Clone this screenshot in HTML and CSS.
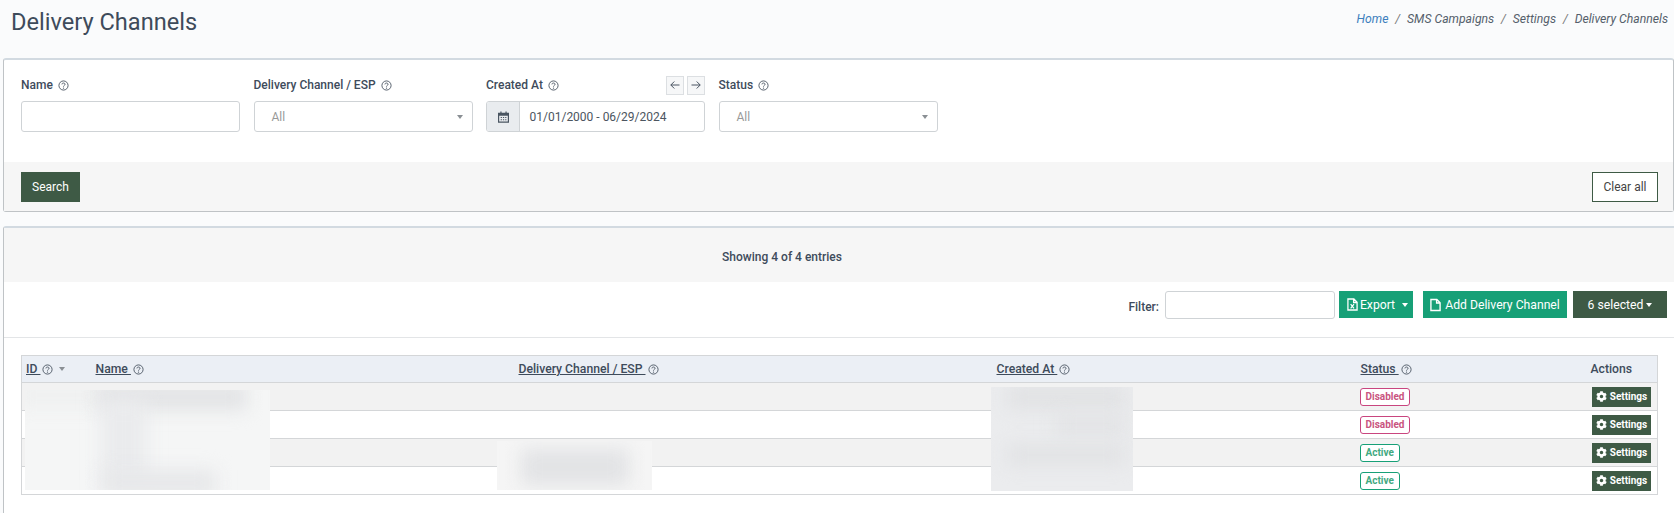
FILE: index.html
```html
<!DOCTYPE html>
<html lang="en">
<head>
<meta charset="utf-8">
<title>Delivery Channels</title>
<link rel="stylesheet" href="styles.css">
</head>
<body>
<svg class="defs" width="0" height="0" aria-hidden="true">
  <symbol id="q" viewBox="0 0 12 12"><circle cx="6" cy="6" r="5" fill="none" stroke="currentColor" stroke-width="1"/><path d="M4.3 4.8c0-1 .8-1.5 1.7-1.5s1.7.6 1.7 1.4c0 1.2-1.7 1.2-1.7 2.5" fill="none" stroke="currentColor" stroke-width="1"/><circle cx="6" cy="8.8" r=".7" fill="currentColor"/></symbol>
  <symbol id="gear" viewBox="0 0 512 512"><path fill="currentColor" d="M487.4 315.7l-42.6-24.6c4.3-23.2 4.3-47 0-70.2l42.6-24.6c4.9-2.8 7.1-8.6 5.5-14-11.1-35.6-30-67.8-54.7-94.6-3.8-4.1-10-5.1-14.8-2.3L380.8 110c-17.9-15.4-38.5-27.3-60.8-35.1V25.8c0-5.6-3.9-10.5-9.4-11.7-36.7-8.2-74.3-7.8-109.2 0-5.5 1.2-9.4 6.1-9.4 11.7V75c-22.2 7.9-42.8 19.8-60.8 35.1L88.7 85.5c-4.9-2.8-11-1.9-14.8 2.3-24.7 26.7-43.6 58.9-54.7 94.6-1.7 5.4.6 11.2 5.5 14L67.3 221c-4.3 23.2-4.3 47 0 70.2l-42.6 24.6c-4.9 2.8-7.1 8.6-5.5 14 11.1 35.6 30 67.8 54.7 94.6 3.8 4.1 10 5.1 14.8 2.3l42.6-24.6c17.9 15.4 38.5 27.3 60.8 35.1v49.2c0 5.6 3.9 10.5 9.4 11.7 36.7 8.2 74.3 7.8 109.2 0 5.5-1.2 9.4-6.1 9.4-11.7v-49.2c22.2-7.9 42.8-19.8 60.8-35.1l42.6 24.6c4.9 2.8 11 1.9 14.8-2.3 24.7-26.7 43.6-58.9 54.7-94.6 1.5-5.5-.7-11.3-5.6-14.1zM256 336c-44.1 0-80-35.9-80-80s35.9-80 80-80 80 35.9 80 80-35.9 80-80 80z"/></symbol>
</svg>

<header class="page-head">
  <h1 class="title">Delivery Channels</h1>
  <nav class="crumbs"><a class="crumb-link">Home</a><span class="sep">/</span><span>SMS Campaigns</span><span class="sep">/</span><span>Settings</span><span class="sep">/</span><span>Delivery Channels</span></nav>
</header>

<section class="panel search-panel">
  <div class="fields">
    <div class="field">
      <div class="label-row"><label class="lbl">Name</label><svg class="qi"><use href="#q"/></svg></div>
      <div class="control"></div>
    </div>
    <div class="field">
      <div class="label-row"><label class="lbl">Delivery Channel / ESP</label><svg class="qi"><use href="#q"/></svg></div>
      <div class="control select"><span class="ph">All</span><i class="caret gray"></i></div>
    </div>
    <div class="field">
      <div class="label-row"><label class="lbl">Created At</label><svg class="qi"><use href="#q"/></svg>
        <span class="arrows">
          <span class="arrow"><svg viewBox="0 0 12 12" width="12" height="12"><path d="M10.5 6H1.8M5.3 2.5 1.8 6l3.5 3.5" fill="none" stroke="currentColor" stroke-width="1"/></svg></span>
          <span class="arrow"><svg viewBox="0 0 12 12" width="12" height="12"><path d="M1.5 6h8.7M6.7 2.5 10.2 6 6.7 9.5" fill="none" stroke="currentColor" stroke-width="1"/></svg></span>
        </span>
      </div>
      <div class="control date">
        <span class="addon"><svg viewBox="0 0 14 14" width="13" height="14"><path fill="none" stroke="currentColor" stroke-width="1.3" d="M1.7 3h10.6v9.6H1.7z"/><path fill="currentColor" d="M1.7 3h10.6v2.6H1.7zM3.6 1h1.3v2.5H3.6zM9.1 1h1.3v2.5H9.1zM4 7h1.3v1.2H4zM6.4 7h1.3v1.2H6.4zM8.8 7h1.3v1.2H8.8zM4 9.4h1.3v1.2H4zM6.4 9.4h1.3v1.2H6.4zM8.8 9.4h1.3v1.2H8.8z"/></svg></span>
        <span class="date-val">01/01/2000 - 06/29/2024</span>
      </div>
    </div>
    <div class="field">
      <div class="label-row"><label class="lbl">Status</label><svg class="qi"><use href="#q"/></svg></div>
      <div class="control select"><span class="ph">All</span><i class="caret gray"></i></div>
    </div>
  </div>
  <div class="search-foot">
    <button class="btn dark search">Search</button>
    <button class="btn outline">Clear all</button>
  </div>
</section>

<section class="panel results">
  <div class="showing">Showing 4 of 4 entries</div>
  <div class="toolbar">
    <span class="filter-lbl">Filter:</span>
    <span class="control filter-input"></span>
    <button class="btn green export">
      <svg viewBox="0 0 12 14" width="10" height="13"><path d="M1 1h6.5L11 4.5V13H1zM7.2 1v3.8H11" fill="none" stroke="currentColor" stroke-width="1.4"/><path d="M4 6.5l3.6 4.6M7.6 6.5 4 11.1" stroke="currentColor" stroke-width="1.3"/></svg>
      Export<i class="caret white ex-caret"></i></button>
    <button class="btn green add">
      <svg viewBox="0 0 12 14" width="11" height="14"><path d="M1 1h6.5L11 4.5V13H1zM7.2 1v3.8H11" fill="none" stroke="currentColor" stroke-width="1.5"/></svg>
      Add Delivery Channel</button>
    <button class="btn dark selected">6 selected<i class="caret white sel-caret"></i></button>
  </div>

  <div class="table-wrap">
    <table class="grid">
      <colgroup><col class="c-id"><col class="c-name"><col class="c-esp"><col class="c-date"><col class="c-status"><col></colgroup>
      <thead>
        <tr>
          <th><a class="sort">ID </a><svg class="qi th-q"><use href="#q"/></svg><i class="caret gray id-caret"></i></th>
          <th><a class="sort">Name </a><svg class="qi th-q"><use href="#q"/></svg></th>
          <th><a class="sort">Delivery Channel / ESP </a><svg class="qi th-q"><use href="#q"/></svg></th>
          <th><a class="sort">Created At </a><svg class="qi th-q"><use href="#q"/></svg></th>
          <th><a class="sort">Status </a><svg class="qi th-q"><use href="#q"/></svg></th>
          <th class="act-h">Actions</th>
        </tr>
      </thead>
      <tbody>
        <tr class="odd"><td></td><td></td><td></td><td></td><td><span class="badge off">Disabled</span></td><td class="act"><button class="set"><svg class="gear"><use href="#gear"/></svg>Settings</button></td></tr>
        <tr><td></td><td></td><td></td><td></td><td><span class="badge off">Disabled</span></td><td class="act"><button class="set"><svg class="gear"><use href="#gear"/></svg>Settings</button></td></tr>
        <tr class="odd"><td></td><td></td><td></td><td></td><td><span class="badge on">Active</span></td><td class="act"><button class="set"><svg class="gear"><use href="#gear"/></svg>Settings</button></td></tr>
        <tr><td></td><td></td><td></td><td></td><td><span class="badge on">Active</span></td><td class="act"><button class="set"><svg class="gear"><use href="#gear"/></svg>Settings</button></td></tr>
      </tbody>
    </table>
    <div class="blur b-name"><i class="streak s0"></i><i class="streak s1"></i><i class="streak s2"></i><i class="streak s4"></i></div>
    <div class="blur b-esp"><i class="streak s5"></i></div>
    <div class="blur b-date"><i class="streak s7"></i><i class="streak s8"></i><i class="streak s9"></i></div>
  </div>
</section>
</body>
</html>
```
FILE: styles.css
```css
* { box-sizing: border-box; }
html, body { margin: 0; height: 513px; overflow: hidden; }
body {
  background: #fafbfc;
  font-family: Roboto, "Liberation Sans", sans-serif;
  color: #3e4b5b;
  padding-left: 3px;
  display: flex;
  flex-direction: column;
}
.defs { position: absolute; }

.page-head {
  height: 58px;
  margin-left: -3px;
  padding: 8px 6px 0 11px;
  display: flex;
  justify-content: space-between;
  align-items: flex-start;
  flex: none;
}
.title { margin: 0; font-size: 23.6px; font-weight: 400; line-height: 29px; color: #3e4b5b; }
.crumbs { font-size: 12.2px; font-style: italic; color: #555f6b; display: flex; gap: 6.9px; line-height: 20px; margin-top: 1px; }
.crumb-link { color: #3d7fbd; }
.sep { color: #777; }

.panel { background: #fff; flex: none; }
.search-panel {
  height: 154px;
  border: 1px solid #bfc3c6;
  border-top: 2px solid #d2dae1;
  border-radius: 3px;
  display: flex;
  flex-direction: column;
  margin-bottom: 14px;
}
.fields { flex: 1; display: flex; gap: 13.5px; padding: 13px 17px 0; }
.field { width: 219px; }
.label-row { height: 24px; display: flex; align-items: center; gap: 5px; margin-bottom: 4px; }
.lbl { font-size: 12px; font-weight: 500; color: #3e4b5b; }
.qi { width: 11px; height: 11px; color: #4a5562; flex: none; }
.arrows { margin-left: auto; display: flex; gap: 3px; }
.arrow { width: 18px; height: 19px; border: 1px solid #dcdfe2; background: #f6f7f8; display: flex; align-items: center; justify-content: center; color: #4a5562; }
.control { display: flex; align-items: center; height: 31px; border: 1px solid #cfd3d6; border-radius: 3px; background: #fff; font-size: 12px; }
.select { padding: 0 9px 0 17px; justify-content: space-between; }
.ph { color: #999; }
.caret { display: inline-block; width: 0; height: 0; border-left: 3.5px solid transparent; border-right: 3.5px solid transparent; border-top: 4px solid #888; }
.caret.white { border-top-color: #fff; }
.caret.gray { border-top-color: #8a8f94; }
.date { overflow: hidden; }
.addon { width: 33px; height: 100%; background: #e9ecef; border-right: 1px solid #cfd3d6; display: flex; align-items: center; justify-content: center; color: #4a5562; flex: none; }
.date-val { padding-left: 9.5px; color: #4c5560; }

.search-foot { height: 49px; background: #f6f6f6; display: flex; justify-content: space-between; align-items: flex-start; padding: 10px 15px 0 17px; }
.btn { border: 0; font-family: inherit; font-size: 12px; border-radius: 0; height: 30px; display: inline-flex; align-items: center; justify-content: center; padding: 0 0 1px; }
.btn.dark { background: #3e5a45; color: #fff; }
.btn.green { background: #17a077; color: #fff; }
.btn.outline { background: #fff; color: #444; border: 1px solid #3e5a45; width: 66px; }
.search { width: 59px; }

.results { flex: 1; border-left: 1px solid #bfc3c6; border-top: 2px solid #d2dae1; border-radius: 3px 0 0 0; }
.showing { height: 54px; background: #f6f6f6; display: flex; align-items: center; justify-content: center; font-size: 12px; font-weight: 500; color: #3e4b5b; padding: 4px 114px 0 0; }
.toolbar { height: 56px; padding: 9px 7px 0 0; border-bottom: 1px solid #e3e5e7; display: flex; align-items: flex-start; justify-content: flex-end; }
.filter-lbl { font-size: 12px; font-weight: 500; margin-right: 6px; line-height: 32px; }
.filter-input { width: 170px; height: 28px; margin-right: 4px; }
.toolbar .btn { height: 27px; font-size: 12.2px; padding: 0; }
.export { width: 74px; gap: 2px; margin-right: 10px; padding-left: 3px !important; }
.export svg { width: 11px; }
.ex-caret { margin-left: 5px; }
.add { width: 144px; gap: 4px; margin-right: 6px; }
.selected { width: 94px; }
.sel-caret { margin-left: 3px; }

.table-wrap { position: relative; margin: 17px 16px 0 17px; }
.grid { width: 100%; border-collapse: collapse; table-layout: fixed; border: 1px solid #d4d6d8; font-size: 12.2px; }
.c-id { width: 70px; }
.c-name { width: 423px; }
.c-esp { width: 478px; }
.c-date { width: 364px; }
.c-status { width: 230px; }
.grid th { height: 27px; background: #ebeff5; text-align: left; font-weight: 500; padding: 0 4px; border-bottom: 1px solid #d4d6d8; white-space: nowrap; }
.grid td { height: 28px; padding: 0 4px; border-bottom: 1px solid #d4d6d8; }
.odd td { background: #f2f2f2; }
.sort { text-decoration: underline; color: #3e4b5b; white-space: pre; }
.th-q { margin-left: 2px; vertical-align: -1.5px; }
.id-caret { margin-left: 6px; vertical-align: 2px; }
.act-h { text-align: right !important; padding-right: 26px !important; }
.act { text-align: right; padding-right: 6px !important; }
.set { border: 0; height: 20px; width: 59px; background: #3e5a45; color: #fff; font: 700 10px Roboto, "Liberation Sans", sans-serif; padding: 0; display: inline-flex; align-items: center; justify-content: center; gap: 3px; vertical-align: middle; }
.gear { width: 11px; height: 11px; }
.badge { display: inline-block; font-size: 10px; font-weight: 700; line-height: 16px; padding: 0 5px; margin-left: -1px; border: 1px solid; border-radius: 3px; background: #fff; vertical-align: middle; }
.off { color: #c9557f; border-color: #c9457f; }
.on { color: #42a97f; border-color: #17a077; }

.blur { position: absolute; overflow: hidden; background: #f5f6f6; }
.b-name { left: 4px; top: 35px; width: 245px; height: 100px; }
.b-esp { left: 476px; top: 86px; width: 155px; height: 49px; background: #f5f5f5; }
.b-date { left: 970px; top: 32px; width: 142px; height: 104px; background: #ebecee; }
.streak { position: absolute; display: block; filter: blur(9px); }
.s0 { left: -10px; top: -8px; width: 90px; height: 26px; background: #eff0f0; }
.s1 { left: 72px; top: -6px; width: 150px; height: 26px; background: #e2e3e5; }
.s2 { left: 76px; top: 10px; width: 46px; height: 80px; background: #eaebed; }
.s4 { left: 76px; top: 80px; width: 115px; height: 26px; background: #e6e7e9; }
.s5 { left: 24px; top: 8px; width: 108px; height: 36px; background: #e2e3e5; }
.s7 { left: 16px; top: -2px; width: 118px; height: 24px; background: #e1e2e4; }
.s8 { left: 64px; top: 28px; width: 70px; height: 20px; background: #e2e3e5; }
.s9 { left: 16px; top: 58px; width: 118px; height: 20px; background: #e1e2e4; }
```
